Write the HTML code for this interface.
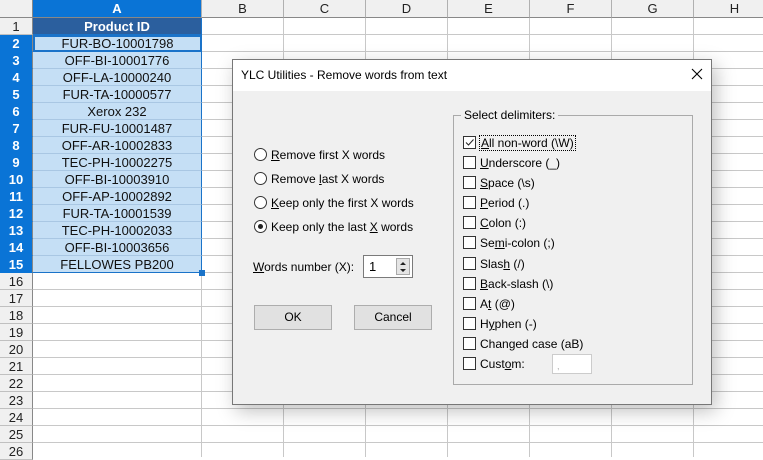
<!DOCTYPE html>
<html><head><meta charset="utf-8"><style>
*{margin:0;padding:0;box-sizing:border-box}
body{width:763px;height:457px;overflow:hidden;background:#fff;font-family:"Liberation Sans",sans-serif;position:relative}
.a{position:absolute}
.grid{left:33px;top:18px;width:730px;height:439px;
background-image:repeating-linear-gradient(to bottom,transparent 0 16px,#c8c8c8 16px 17px)}
.vl{top:18px;width:1px;height:439px;background:#c8c8c8}
.ch{top:0;height:18px;background:#f0f0f0;border-right:1px solid #b0b0b0;border-bottom:1px solid #888;font-size:13px;text-align:center;line-height:18px;color:#222}
.rh{left:0;width:33px;height:17px;background:#f0f0f0;border-bottom:1px solid #c0c0c0;border-right:1px solid #888;font-size:13px;text-align:center;line-height:17px;color:#222}
.rh.s{background:#0a74d6;color:#fff;font-weight:bold;border-bottom-color:#0a74d6}
.ca{left:33px;width:169px;height:17px;background:#c5dff5;border-bottom:1px solid #a9c7e3;border-right:1px solid #1a73c9;font-size:13px;text-align:center;line-height:17px;color:#111}
.dlg{left:232px;top:59px;width:480px;height:346px;background:#f0f0f0;border:1px solid #777;box-shadow:4px 6px 18px rgba(0,0,0,.25)}
.t{font-size:12px;color:#000;white-space:nowrap}
.rad{width:13px;height:13px;border:1px solid #333;border-radius:50%;background:#fff}
.cb{width:13px;height:13px;border:1px solid #333;background:#fff}
u{text-decoration:underline}
.btn{width:78px;height:25px;background:#e1e1e1;border:1px solid #adadad;font-size:12px;text-align:center;line-height:23px}
</style></head><body>
<div class="a grid"></div>
<div class="a vl" style="left:201px"></div>
<div class="a vl" style="left:283px"></div>
<div class="a vl" style="left:365px"></div>
<div class="a vl" style="left:447px"></div>
<div class="a vl" style="left:529px"></div>
<div class="a vl" style="left:611px"></div>
<div class="a vl" style="left:693px"></div>
<div class="a" style="left:0;top:0;width:33px;height:18px;background:#f0f0f0;border-right:1px solid #888;border-bottom:1px solid #888"></div>
<div class="a ch" style="left:33px;width:169px;background:#0a74d6;color:#fff;font-weight:bold">A</div>
<div class="a ch" style="left:202px;width:82px">B</div>
<div class="a ch" style="left:284px;width:82px">C</div>
<div class="a ch" style="left:366px;width:82px">D</div>
<div class="a ch" style="left:448px;width:82px">E</div>
<div class="a ch" style="left:530px;width:82px">F</div>
<div class="a ch" style="left:612px;width:82px">G</div>
<div class="a ch" style="left:694px;width:82px">H</div>

<div class="a rh" style="top:18px">1</div>
<div class="a rh s" style="top:35px">2</div>
<div class="a rh s" style="top:52px">3</div>
<div class="a rh s" style="top:69px">4</div>
<div class="a rh s" style="top:86px">5</div>
<div class="a rh s" style="top:103px">6</div>
<div class="a rh s" style="top:120px">7</div>
<div class="a rh s" style="top:137px">8</div>
<div class="a rh s" style="top:154px">9</div>
<div class="a rh s" style="top:171px">10</div>
<div class="a rh s" style="top:188px">11</div>
<div class="a rh s" style="top:205px">12</div>
<div class="a rh s" style="top:222px">13</div>
<div class="a rh s" style="top:239px">14</div>
<div class="a rh s" style="top:256px">15</div>
<div class="a rh" style="top:273px">16</div>
<div class="a rh" style="top:290px">17</div>
<div class="a rh" style="top:307px">18</div>
<div class="a rh" style="top:324px">19</div>
<div class="a rh" style="top:341px">20</div>
<div class="a rh" style="top:358px">21</div>
<div class="a rh" style="top:375px">22</div>
<div class="a rh" style="top:392px">23</div>
<div class="a rh" style="top:409px">24</div>
<div class="a rh" style="top:426px">25</div>
<div class="a rh" style="top:443px">26</div>

<div class="a ca" style="top:18px;background:#2b5f9e;color:#fff;font-weight:bold;border-bottom-color:#1a73c9">Product ID</div>
<div class="a ca" style="top:35px;border:2px solid #1a73c9;line-height:13px">FUR-BO-10001798</div>
<div class="a ca" style="top:52px">OFF-BI-10001776</div>
<div class="a ca" style="top:69px">OFF-LA-10000240</div>
<div class="a ca" style="top:86px">FUR-TA-10000577</div>
<div class="a ca" style="top:103px">Xerox 232</div>
<div class="a ca" style="top:120px">FUR-FU-10001487</div>
<div class="a ca" style="top:137px">OFF-AR-10002833</div>
<div class="a ca" style="top:154px">TEC-PH-10002275</div>
<div class="a ca" style="top:171px">OFF-BI-10003910</div>
<div class="a ca" style="top:188px">OFF-AP-10002892</div>
<div class="a ca" style="top:205px">FUR-TA-10001539</div>
<div class="a ca" style="top:222px">TEC-PH-10002033</div>
<div class="a ca" style="top:239px">OFF-BI-10003656</div>
<div class="a ca" style="top:256px;border-bottom:1px solid #1a73c9">FELLOWES PB200</div>
<div class="a" style="left:199px;top:270px;width:6px;height:6px;background:#1a73c9"></div>

<div class="a dlg">
 <div class="a" style="left:0;top:0;width:478px;height:31px;background:#fff"></div>
 <div class="a t" style="left:8px;top:8px;font-size:12px">YLC Utilities - Remove words from text</div>
 <svg class="a" style="left:458px;top:8px" width="12" height="12"><path d="M1 1L11 11M11 1L1 11" stroke="#000" stroke-width="1.1"/></svg>

 <div class="a rad" style="left:21px;top:88px"></div><div class="a t" style="left:38px;top:88px"><u>R</u>emove first X words</div>
 <div class="a rad" style="left:21px;top:112px"></div><div class="a t" style="left:38px;top:112px">Remove <u>l</u>ast X words</div>
 <div class="a rad" style="left:21px;top:136px"></div><div class="a t" style="left:38px;top:136px"><u>K</u>eep only the first X words</div>
 <div class="a rad" style="left:21px;top:160px"></div><div class="a" style="left:25px;top:164px;width:5px;height:5px;border-radius:50%;background:#222"></div><div class="a t" style="left:38px;top:160px">Keep only the last <u>X</u> words</div>

 <div class="a t" style="left:20px;top:200px"><u>W</u>ords number (X):</div>
 <div class="a" style="left:130px;top:195px;width:50px;height:23px;background:#fff;border:1px solid #7a7a7a"></div>
 <div class="a t" style="left:136px;top:199px;font-size:13px">1</div>
 <div class="a" style="left:163px;top:198px;width:14px;height:17px;background:#e5e5e5;border:1px solid #aaa"></div>
 <svg class="a" style="left:165px;top:200px" width="10" height="14"><path d="M2 5L5 2L8 5Z M2 9L5 12L8 9Z" fill="#222"/></svg>

 <div class="a btn" style="left:21px;top:245px">OK</div>
 <div class="a btn" style="left:121px;top:245px">Cancel</div>

 <div class="a" style="left:220px;top:55px;width:240px;height:270px;border:1px solid #aaa"></div>
 <div class="a t" style="left:228px;top:48px;background:#f0f0f0;padding:0 3px">Select delimiters:</div>

 <div class="a cb" style="left:230px;top:76px"></div>
 <svg class="a" style="left:231px;top:77px" width="11" height="11"><path d="M2 5.5L4.5 8L9.5 2.5" stroke="#222" stroke-width="1" fill="none"/></svg>
 <div class="a t" style="left:246px;top:75px;border:1px dotted #000;padding:0 1px"><u>A</u>ll non-word (\W)</div>
 <div class="a cb" style="left:230px;top:96px"></div><div class="a t" style="left:247px;top:96px"><u>U</u>nderscore (_)</div>
 <div class="a cb" style="left:230px;top:116px"></div><div class="a t" style="left:247px;top:116px"><u>S</u>pace (\s)</div>
 <div class="a cb" style="left:230px;top:136px"></div><div class="a t" style="left:247px;top:136px"><u>P</u>eriod (.)</div>
 <div class="a cb" style="left:230px;top:156px"></div><div class="a t" style="left:247px;top:156px"><u>C</u>olon (:)</div>
 <div class="a cb" style="left:230px;top:176px"></div><div class="a t" style="left:247px;top:176px">Se<u>m</u>i-colon (;)</div>
 <div class="a cb" style="left:230px;top:197px"></div><div class="a t" style="left:247px;top:197px">Slas<u>h</u> (/)</div>
 <div class="a cb" style="left:230px;top:217px"></div><div class="a t" style="left:247px;top:217px"><u>B</u>ack-slash (\)</div>
 <div class="a cb" style="left:230px;top:237px"></div><div class="a t" style="left:247px;top:237px">A<u>t</u> (@)</div>
 <div class="a cb" style="left:230px;top:257px"></div><div class="a t" style="left:247px;top:257px">H<u>y</u>phen (-)</div>
 <div class="a cb" style="left:230px;top:277px"></div><div class="a t" style="left:247px;top:277px">Chan<u>g</u>ed case (aB)</div>
 <div class="a cb" style="left:230px;top:297px"></div><div class="a t" style="left:247px;top:297px">Cust<u>o</u>m:</div>
 <div class="a" style="left:319px;top:294px;width:40px;height:20px;background:#fff;border:1px solid #ccc;font-size:9px;color:#aaa;padding:6px 0 0 4px">,</div>
</div>
</body></html>
